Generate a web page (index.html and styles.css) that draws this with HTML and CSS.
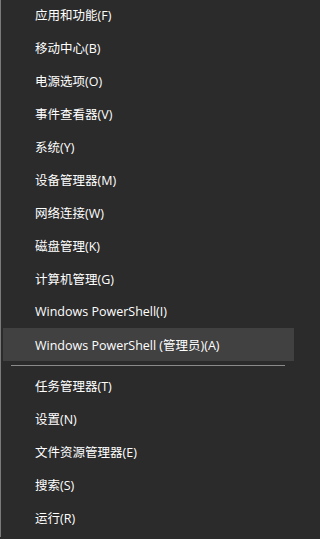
FILE: index.html
```html
<!DOCTYPE html>
<html lang="zh-CN">
<head>
<meta charset="utf-8">
<title>Win+X</title>
<link rel="stylesheet" href="styles.css">
</head>
<body>
<div class="menu">
  <ul class="group">
    <li class="item">应用和功能(F)</li>
    <li class="item">移动中心(B)</li>
    <li class="item">电源选项(O)</li>
    <li class="item">事件查看器(V)</li>
    <li class="item">系统(Y)</li>
    <li class="item">设备管理器(M)</li>
    <li class="item">网络连接(W)</li>
    <li class="item">磁盘管理(K)</li>
    <li class="item">计算机管理(G)</li>
    <li class="item">Windows PowerShell(I)</li>
    <li class="item hover">Windows PowerShell (管理员)(A)</li>
  </ul>
  <div class="sep"></div>
  <ul class="group">
    <li class="item">任务管理器(T)</li>
    <li class="item">设置(N)</li>
    <li class="item">文件资源管理器(E)</li>
    <li class="item">搜索(S)</li>
    <li class="item">运行(R)</li>
  </ul>
</div>
</body>
</html>
```

FILE: styles.css
```css
html, body {
  margin: 0;
  padding: 0;
  height: 100%;
  background: #2b2b2b;
}
body {
  overflow: hidden;
  font-family: "Open Sans", "Noto Sans CJK SC", sans-serif;
  font-size: 12.5px;
  color: #ffffff;
}
.menu {
  box-sizing: border-box;
  width: 296px;
  height: 100%;
  border-left: 1px solid #7a7a7a;
  padding: 0 2px 0 2px;
  margin-top: -2px;
}
.group {
  list-style: none;
  margin: 0;
  padding: 0;
}
.item {
  height: 33px;
  display: flex;
  align-items: center;
  padding-left: 32px;
  white-space: nowrap;
}
.item.hover {
  background: #414141;
}
.sep {
  height: 8px;
  display: flex;
  align-items: center;
  padding: 0 8px;
}
.sep::before {
  content: "";
  flex: 1;
  height: 1px;
  background: #8a8a8a;
  margin-right: 1px;
}
```
